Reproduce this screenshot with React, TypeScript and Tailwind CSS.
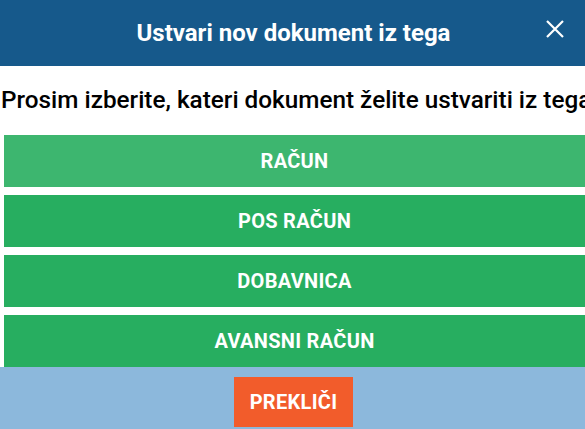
import React from "react";

export default function App() {
  const items = ["RAČUN", "POS RAČUN", "DOBAVNICA", "AVANSNI RAČUN"];
  return (
    <div
      className="w-[585px] h-[429px] overflow-hidden bg-white flex flex-col"
      style={{ fontFamily: "Roboto, 'Liberation Sans', sans-serif" }}
    >
      <div className="h-[66px] shrink-0 bg-[#16598b] relative flex items-center justify-center">
        <span className="text-white font-bold text-[24px] leading-none ml-[2px]">
          Ustvari nov dokument iz tega
        </span>
        <svg
          className="absolute left-[545px] top-[19px]"
          width="20"
          height="20"
          viewBox="0 0 20 20"
        >
          <path d="M2 2 L18 18 M18 2 L2 18" stroke="white" strokeWidth="2.2" />
        </svg>
      </div>
      <div className="h-[69px] shrink-0 flex items-center whitespace-nowrap pl-[1px] overflow-hidden">
        <span className="text-black font-medium text-[24.3px] leading-none">
          Prosim izberite, kateri dokument želite ustvariti iz tega
        </span>
      </div>
      <div className="flex-1 flex flex-col gap-[8px] pl-[4px] overflow-hidden">
        {items.map((t, i) => (
          <div
            key={t}
            className={`h-[52px] shrink-0 w-[581px] flex items-center justify-center text-white font-bold text-[20px] tracking-[0.3px] ${
              i === 0 ? "bg-[#3db66f]" : "bg-[#27ae60]"
            }`}
          >
            {t}
          </div>
        ))}
      </div>
      <div className="h-[62px] shrink-0 bg-[#8cb8dc] flex items-start justify-center pt-[10px]">
        <div className="w-[119px] h-[50px] ml-[2px] bg-[#f25c2b] flex items-center justify-center text-white font-bold text-[20px] tracking-[0.3px]">
          PREKLIČI
        </div>
      </div>
    </div>
  );
}
